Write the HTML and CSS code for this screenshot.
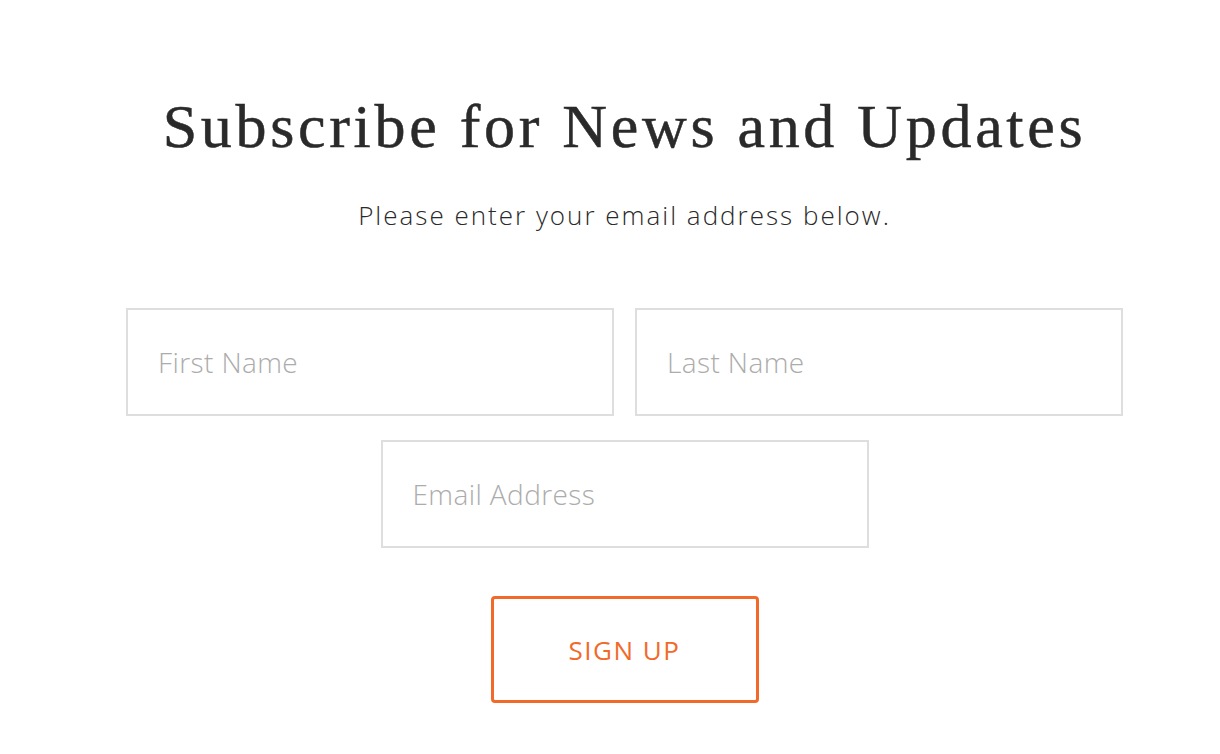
FILE: index.html
```html
<!DOCTYPE html>
<html lang="en">
<head>
  <meta charset="UTF-8">
  <meta name="viewport" content="width=device-width, initial-scale=1.0">
  <title>Subscribe</title>
  <link rel="stylesheet" href="styles.css">
</head>
<body>
  <div class="subscribe">
    <h1>Subscribe for News and Updates</h1>
    <p class="intro">Please enter your email address below.</p>

    <form class="signup-form" onsubmit="return false;">
      <div class="name-row">
        <input class="field" type="text" placeholder="First Name">
        <input class="field" type="text" placeholder="Last Name">
      </div>
      <div class="email-row">
        <input class="field" type="email" placeholder="Email Address">
      </div>
      <button class="signup-button" type="submit">SIGN UP</button>
    </form>
  </div>
</body>
</html>
```

FILE: styles.css
```css
body {
  margin: 0;
  padding: 0 0 0 29px;
  background: #ffffff;
  color: #2a2a2a;
  font-family: 'Open Sans', sans-serif;
}

.subscribe {
  display: flex;
  flex-direction: column;
  align-items: center;
  padding-top: 88px;
}

h1 {
  font-family: 'Liberation Serif', serif;
  font-weight: 400;
  font-size: 62px;
  letter-spacing: 3.7px;
  line-height: 76px;
  margin: 0;
  color: #2a2a2a;
  -webkit-text-stroke: 0.5px #2a2a2a;
}

.intro {
  font-size: 26px;
  font-weight: 300;
  letter-spacing: 2px;
  color: #2a2a2a;
  margin: 36px 0 0;
  line-height: 30px;
}

.signup-form {
  margin-top: 78px;
  display: flex;
  flex-direction: column;
  align-items: center;
  gap: 24px;
}

.name-row {
  display: flex;
  gap: 21px;
}

.field {
  width: 488px;
  height: 108px;
  box-sizing: border-box;
  border: 2px solid #dedede;
  border-radius: 0;
  padding: 0 30px;
  font-family: 'Open Sans', sans-serif;
  font-size: 28px;
  font-weight: 300;
  letter-spacing: 0.4px;
  color: #333333;
  outline: none;
}

.field::placeholder {
  color: #acacac;
}

.signup-button {
  margin-top: 24px;
  width: 268px;
  height: 107px;
  background: #ffffff;
  border: 3px solid #f26a2a;
  border-radius: 4px;
  color: #f26a2a;
  font-family: 'Open Sans', sans-serif;
  font-size: 26px;
  font-weight: 400;
  letter-spacing: 1.5px;
  cursor: pointer;
}
```
